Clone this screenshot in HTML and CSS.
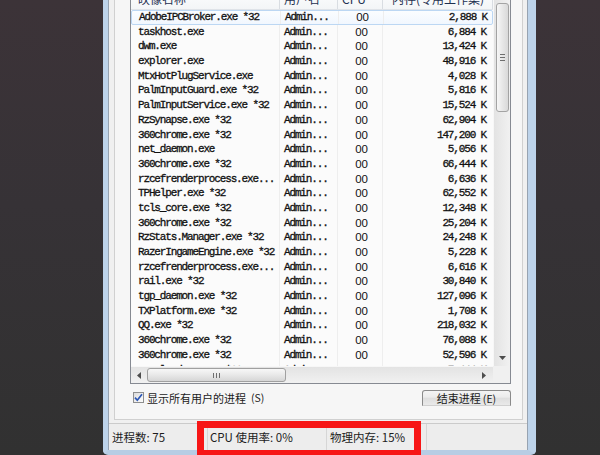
FILE: index.html
```html
<!DOCTYPE html>
<html lang="zh-CN">

<head>
    <meta charset="utf-8">
    <link rel="stylesheet" href="styles.css">
</head>

<body>

    <div id="desk">
        <div id="window">
            <div id="client">
                <div id="tab-panel">
                    <div id="listview">
                        <div class="lv-main">
                            <div class="lv-table">
                                <div class="lv-header">
                                    <div class="hcell">映像名称</div>
                                    <div class="hcell">用户名</div>
                                    <div class="hcell">CPU</div>
                                    <div class="hcell mem-head">内存(专用工作集)</div>
                                </div>
                                <div class="lv-rows">
                                    <div class="row hot"><span class="c-name">AdobeIPCBroker.exe *32</span><span class="c-user">Admin...</span><span class="c-cpu">00</span><span class="c-mem">2,888 K</span></div>
                                    <div class="row"><span class="c-name">taskhost.exe</span><span class="c-user">Admin...</span><span class="c-cpu">00</span><span class="c-mem">6,884 K</span></div>
                                    <div class="row"><span class="c-name">dwm.exe</span><span class="c-user">Admin...</span><span class="c-cpu">00</span><span class="c-mem">13,424 K</span></div>
                                    <div class="row"><span class="c-name">explorer.exe</span><span class="c-user">Admin...</span><span class="c-cpu">00</span><span class="c-mem">48,916 K</span></div>
                                    <div class="row"><span class="c-name">MtxHotPlugService.exe</span><span class="c-user">Admin...</span><span class="c-cpu">00</span><span class="c-mem">4,028 K</span></div>
                                    <div class="row"><span class="c-name">PalmInputGuard.exe *32</span><span class="c-user">Admin...</span><span class="c-cpu">00</span><span class="c-mem">5,816 K</span></div>
                                    <div class="row"><span class="c-name">PalmInputService.exe *32</span><span class="c-user">Admin...</span><span class="c-cpu">00</span><span class="c-mem">15,524 K</span></div>
                                    <div class="row"><span class="c-name">RzSynapse.exe *32</span><span class="c-user">Admin...</span><span class="c-cpu">00</span><span class="c-mem">62,904 K</span></div>
                                    <div class="row"><span class="c-name">360chrome.exe *32</span><span class="c-user">Admin...</span><span class="c-cpu">00</span><span class="c-mem">147,200 K</span></div>
                                    <div class="row"><span class="c-name">net_daemon.exe</span><span class="c-user">Admin...</span><span class="c-cpu">00</span><span class="c-mem">5,056 K</span></div>
                                    <div class="row"><span class="c-name">360chrome.exe *32</span><span class="c-user">Admin...</span><span class="c-cpu">00</span><span class="c-mem">66,444 K</span></div>
                                    <div class="row"><span class="c-name">rzcefrenderprocess.exe...</span><span class="c-user">Admin...</span><span class="c-cpu">00</span><span class="c-mem">6,636 K</span></div>
                                    <div class="row"><span class="c-name">TPHelper.exe *32</span><span class="c-user">Admin...</span><span class="c-cpu">00</span><span class="c-mem">62,552 K</span></div>
                                    <div class="row"><span class="c-name">tcls_core.exe *32</span><span class="c-user">Admin...</span><span class="c-cpu">00</span><span class="c-mem">12,348 K</span></div>
                                    <div class="row"><span class="c-name">360chrome.exe *32</span><span class="c-user">Admin...</span><span class="c-cpu">00</span><span class="c-mem">25,204 K</span></div>
                                    <div class="row"><span class="c-name">RzStats.Manager.exe *32</span><span class="c-user">Admin...</span><span class="c-cpu">00</span><span class="c-mem">24,248 K</span></div>
                                    <div class="row"><span class="c-name">RazerIngameEngine.exe *32</span><span class="c-user">Admin...</span><span class="c-cpu">00</span><span class="c-mem">5,228 K</span></div>
                                    <div class="row"><span class="c-name">rzcefrenderprocess.exe...</span><span class="c-user">Admin...</span><span class="c-cpu">00</span><span class="c-mem">6,616 K</span></div>
                                    <div class="row"><span class="c-name">rail.exe *32</span><span class="c-user">Admin...</span><span class="c-cpu">00</span><span class="c-mem">30,840 K</span></div>
                                    <div class="row"><span class="c-name">tgp_daemon.exe *32</span><span class="c-user">Admin...</span><span class="c-cpu">00</span><span class="c-mem">127,096 K</span></div>
                                    <div class="row"><span class="c-name">TXPlatform.exe *32</span><span class="c-user">Admin...</span><span class="c-cpu">00</span><span class="c-mem">1,708 K</span></div>
                                    <div class="row"><span class="c-name">QQ.exe *32</span><span class="c-user">Admin...</span><span class="c-cpu">00</span><span class="c-mem">218,032 K</span></div>
                                    <div class="row"><span class="c-name">360chrome.exe *32</span><span class="c-user">Admin...</span><span class="c-cpu">00</span><span class="c-mem">76,088 K</span></div>
                                    <div class="row"><span class="c-name">360chrome.exe *32</span><span class="c-user">Admin...</span><span class="c-cpu">00</span><span class="c-mem">52,596 K</span></div>
                                    <div class="row"><span class="c-name">wpscloudsvr.exe *32</span><span class="c-user">Admin...</span><span class="c-cpu">00</span><span class="c-mem">7,444 K</span></div>
                                </div>
                            </div>
                            <div class="vscroll">
                                <div class="sb-btn up"></div>
                                <div class="vthumb"><span class="grip-h"></span></div>
                                <div class="sb-track"></div>
                                <div class="sb-btn down">
                                    <svg width="7" height="4" viewBox="0 0 7 4"><path d="M0 0h7L3.5 4z" fill="#4d4d4d"/></svg>
                                </div>
                            </div>
                        </div>
                        <div class="lv-bottom">
                            <div class="hscroll">
                                <div class="sb-btn left">
                                    <svg width="4" height="7" viewBox="0 0 4 7"><path d="M4 0v7L0 3.5z" fill="#4d4d4d"/></svg>
                                </div>
                                <div class="hthumb"><span class="grip-v"></span></div>
                                <div class="sb-track"></div>
                                <div class="sb-btn right">
                                    <svg width="4" height="7" viewBox="0 0 4 7"><path d="M0 0v7L4 3.5z" fill="#4d4d4d"/></svg>
                                </div>
                            </div>
                            <div class="sb-corner"></div>
                        </div>
                    </div>
                    <div id="controls">
                        <label class="check">
                            <span class="check-box">
                                <svg width="9" height="9" viewBox="0 0 9 9"><path d="M1 4.6l2.3 2.6L8 1.2" fill="none" stroke="#2b56b5" stroke-width="1.7"/></svg>
                            </span>
                            显示所有用户的进程<span class="accel">(S)</span>
                        </label>
                        <div class="btn">结束进程<span class="accel">(E)</span></div>
                    </div>
                </div>
                <div id="statusbar">
                    <div class="part first">进程数: 75</div>
                    <div class="part second">CPU 使用率: 0%</div>
                    <div class="part third">物理内存: 15%</div>
                </div>
            </div>
        </div>
        <div id="mark"></div>
    </div>

</body>

</html>
```

FILE: styles.css
```css
body {
    margin: 0;
    background-color: #323132;
}

#desk {
    position: relative;
    display: flex;
    width: 600px;
    height: 455px;
    padding-left: 103px;
    box-sizing: border-box;
    overflow: hidden;
    background: linear-gradient(180deg, #3c3338 0%, #363236 45%, #313131 100%);
}

#window {
    width: 433px;
    height: 485px;
    margin-top: -30px;
    box-sizing: border-box;
    border-left: 5px solid #bdd3ea;
    border-right: 8px solid #bdd3ea;
    border-bottom: 5px solid #b7cde4;
    border-radius: 0 0 5px 5px;
}

#client {
    display: flex;
    flex-direction: column;
    height: 100%;
    border-left: 1px solid #97a3b1;
    border-right: 1px solid #97a3b1;
    background-color: #f0f0f0;
}

#tab-panel {
    flex: 1;
    display: flex;
    flex-direction: column;
    margin: 0 4px 3px 5px;
    padding: 16px 11px 0 15px;
    border: 1px solid #d0d0d0;
    background-color: #f6f6f6;
}

#listview {
    display: flex;
    flex-direction: column;
    border: 1px solid #868a92;
    background-color: #fbfbfb;
}

.lv-main {
    display: flex;
    height: 378px;
}

.lv-table {
    width: 362px;
    display: flex;
    flex-direction: column;
}

.lv-header {
    display: grid;
    grid-template-columns: 149px 58px 45px 110px;
    height: 22px;
    box-sizing: border-box;
    border-bottom: 1px solid #dfe3e8;
    background: linear-gradient(180deg, #ffffff, #f3f5f7);
}

.hcell {
    padding: 1px 0 0 7px;
    border-right: 1px solid #d9dde2;
    font-family: "Noto Sans CJK SC", sans-serif;
    font-size: 12px;
    line-height: 20px;
    color: #1e3050;
    white-space: nowrap;
    overflow: hidden;
}

.hcell:nth-child(2),
.hcell:nth-child(3) {
    padding-left: 4px;
}

.mem-head {
    padding-left: 9px;
}

.lv-rows {
    height: 356px;
    overflow: hidden;
}

.row {
    display: grid;
    grid-template-columns: 149px 58px 45px 110px;
    height: 14.7px;
    box-sizing: border-box;
    line-height: 14.7px;
    color: #111111;
}

.row.hot {
    border: 1px solid #bcd7f3;
    border-radius: 2px;
    background: linear-gradient(180deg, #fbfdff, #f1f7fe);
    line-height: 12.7px;
}

.row span {
    white-space: nowrap;
    overflow: hidden;
    border-right: 1px solid #eeeeee;
}

.c-name,
.c-user,
.c-mem {
    font-family: "Liberation Mono", monospace;
    font-size: 11px;
    letter-spacing: -1.15px;
    -webkit-text-stroke: 0.3px #111111;
}

.c-name {
    padding-left: 7px;
}

.c-user {
    padding-left: 4px;
}

.c-cpu {
    font-family: "Liberation Sans", Arial, sans-serif;
    font-size: 11.5px;
    text-align: right;
    padding-right: 14px;
}

.c-mem {
    text-align: right;
    padding-right: 7px;
}

.row .c-mem {
    border-right: none;
}

/* scrollbars */

.vscroll {
    width: 17px;
    display: flex;
    flex-direction: column;
    align-items: center;
    background: linear-gradient(90deg, #e3e3e3, #f1f1f1);
    border-left: 1px solid #f7f7f7;
    box-sizing: border-box;
}

.sb-btn {
    display: flex;
    align-items: center;
    justify-content: center;
}

.sb-btn.up {
    height: 15px;
}

.sb-btn.down {
    height: 17px;
}

.vthumb {
    width: 13px;
    height: 109px;
    box-sizing: border-box;
    display: flex;
    align-items: center;
    justify-content: center;
    border: 1px solid #a3a3a3;
    border-radius: 3px;
    background: linear-gradient(90deg, #f7f7f7, #e7e7e7 50%, #d9d9d9);
}

.grip-h {
    width: 5px;
    height: 5px;
    border-top: 1px solid #6e6e6e;
    border-bottom: 1px solid #6e6e6e;
    position: relative;
}

.grip-h::after {
    content: "";
    position: absolute;
    left: 0;
    right: 0;
    top: 2px;
    border-top: 1px solid #6e6e6e;
}

.sb-track {
    flex: 1;
}

.lv-bottom {
    display: flex;
    height: 17px;
}

.hscroll {
    width: 362px;
    display: flex;
    align-items: center;
    background: linear-gradient(180deg, #e3e3e3, #f1f1f1);
    border-top: 1px solid #f7f7f7;
    box-sizing: border-box;
}

.sb-btn.left {
    width: 16px;
}

.sb-btn.right {
    width: 18px;
}

.hthumb {
    width: 139px;
    height: 14px;
    box-sizing: border-box;
    display: flex;
    align-items: center;
    justify-content: center;
    border: 1px solid #a0a0a0;
    border-radius: 3px;
    background: linear-gradient(180deg, #f7f7f7, #e8e8e8 50%, #d6d6d6);
}

.grip-v {
    width: 5px;
    height: 5px;
    border-left: 1px solid #6e6e6e;
    border-right: 1px solid #6e6e6e;
    position: relative;
}

.grip-v::after {
    content: "";
    position: absolute;
    top: 0;
    bottom: 0;
    left: 2px;
    border-left: 1px solid #6e6e6e;
}

.sb-corner {
    flex: 1;
    background-color: #f0f0f0;
}

/* controls under the list */

#controls {
    display: flex;
    justify-content: space-between;
    align-items: center;
    height: 17px;
    margin-top: 5px;
    font-family: "Noto Sans CJK SC", sans-serif;
    font-size: 11px;
    color: #1a1a1a;
}

.check {
    display: flex;
    align-items: center;
    gap: 3px;
    margin-left: 3px;
}

.check-box {
    width: 11px;
    height: 11px;
    box-sizing: border-box;
    display: flex;
    align-items: center;
    justify-content: center;
    border: 1px solid #8e8f8f;
    background: linear-gradient(135deg, #dcdcdc, #fdfdfd);
}

.accel {
    font-size: 10.5px;
    margin-left: 2px;
}

.btn {
    width: 89px;
    height: 16px;
    box-sizing: border-box;
    border: 1px solid #8a8a8a;
    border-bottom-color: #d0d0d0;
    border-radius: 3px 3px 0 0;
    background: linear-gradient(180deg, #f4f4f4, #ebebeb 45%, #dedede 50%, #e9e9e9);
    text-align: center;
    line-height: 14px;
}

/* status bar */

#statusbar {
    display: flex;
    height: 27px;
    box-sizing: border-box;
    border-top: 1px solid #cbcbcb;
    background-color: #ededed;
    font-family: "Noto Sans CJK SC", sans-serif;
    font-size: 11.5px;
    line-height: 27px;
    color: #1c1c1c;
}

.part {
    border-right: 1px solid #d6d6d6;
    white-space: nowrap;
}

.part.first {
    width: 95px;
    padding-left: 3px;
}

.part.second {
    width: 116px;
    padding-left: 2px;
}

.part.third {
    width: 96px;
    padding-left: 3px;
}

#mark {
    position: absolute;
    left: 197px;
    top: 421px;
    width: 224px;
    height: 36px;
    box-sizing: border-box;
    border: 7px solid #f71616;
}
```
